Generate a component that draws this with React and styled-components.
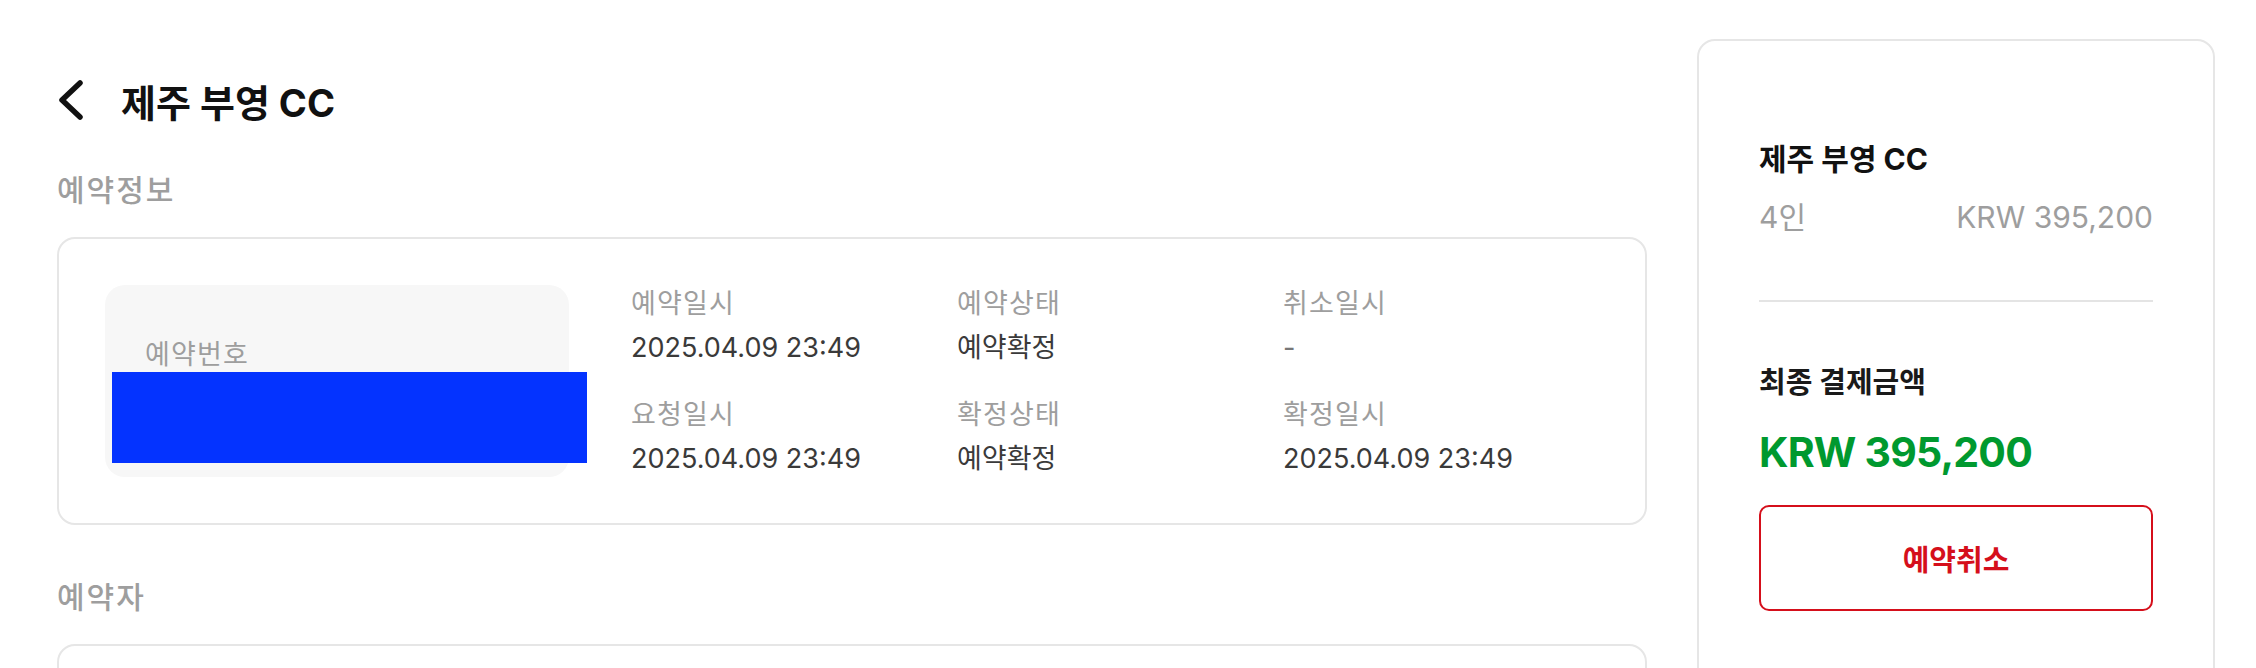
import styled, { createGlobalStyle } from "styled-components";

const GlobalStyle = createGlobalStyle`
  html, body {
    margin: 0;
    padding: 0;
    overflow: hidden;
    background: #ffffff;
  }
  body {
    font-family: "Inter", "Noto Sans CJK KR", sans-serif;
    color: #222;
  }
`;

const Page = styled.div`
  display: flex;
  align-items: flex-start;
  gap: 50px;
  padding: 39px 41px 0 57px;
`;

const Main = styled.div`
  flex: 0 0 1590px;
  min-width: 0;
  padding-top: 36px;
`;

const TitleRow = styled.div`
  display: flex;
  align-items: center;
  gap: 36px;
  height: 56px;
`;

const BackButton = styled.button`
  display: grid;
  place-content: center;
  background: transparent;
  border: none;
  padding: 0;
  margin-top: -6px;
  cursor: pointer;
`;

const Title = styled.h1`
  margin: 0;
  font-size: 38px;
  line-height: 56px;
  font-weight: 700;
  color: #111;
`;

const SectionLabel = styled.h2`
  margin: ${(p) => p.$top}px 0 24px;
  font-size: 30px;
  line-height: 45px;
  font-weight: 500;
  letter-spacing: 2px;
  color: #9e9e9e;
`;

const Card = styled.div`
  border: 2px solid #e6e6e6;
  border-radius: 18px;
  padding: 46px;
  display: flex;
  align-items: flex-start;
  min-height: ${(p) => p.$minHeight || 0}px;
`;

const NumberBox = styled.div`
  position: relative;
  width: 464px;
  height: 192px;
  flex-shrink: 0;
  box-sizing: border-box;
  padding: 50px 40px 0;
  background: #f7f7f7;
  border-radius: 20px;
`;

const Redacted = styled.div`
  position: absolute;
  left: 7px;
  top: 87px;
  width: 475px;
  height: 91px;
  background: #0433ff;
`;

const InfoGrid = styled.div`
  display: grid;
  grid-template-columns: repeat(3, 326px);
  align-content: start;
  row-gap: 27px;
  height: 192px;
  margin-left: 62px;
  margin-top: -1px;
`;

const InfoItem = styled.div`
  display: flex;
  flex-direction: column;
  gap: 4px;
`;

const InfoLabel = styled.span`
  font-size: 27px;
  line-height: 40px;
  letter-spacing: 1.2px;
  color: #9e9e9e;
`;

const InfoValue = styled.span`
  font-size: 27px;
  line-height: 40px;
  color: ${(p) => (p.$muted ? "#777" : "#3a3a3a")};
`;

const Sidebar = styled.aside`
  width: 518px;
  flex-shrink: 0;
  box-sizing: border-box;
  border: 2px solid #e6e6e6;
  border-radius: 18px;
  padding: 97px 60px 80px;
`;

const SideTitle = styled.div`
  font-size: 30px;
  line-height: 43px;
  font-weight: 700;
  color: #111;
`;

const PriceRow = styled.div`
  display: flex;
  justify-content: space-between;
  margin-top: 14px;
  font-size: 30px;
  line-height: 44px;
  color: #9e9e9e;
`;

const Divider = styled.hr`
  border: none;
  height: 2px;
  background: #e4e4e4;
  margin: 61px 0 60px;
`;

const TotalLabel = styled.div`
  font-size: 29px;
  line-height: 42px;
  font-weight: 700;
  color: #1a1a1a;
`;

const TotalAmount = styled.div`
  margin-top: 17px;
  font-size: 41px;
  line-height: 63px;
  font-weight: 700;
  color: #00992f;
  letter-spacing: -0.8px;
`;

const CancelButton = styled.button`
  display: block;
  width: 100%;
  height: 106px;
  margin-top: 21px;
  background: #fff;
  border: 2px solid #d50f1b;
  border-radius: 10px;
  font-family: inherit;
  font-size: 29px;
  font-weight: 700;
  color: #d50f1b;
  cursor: pointer;
`;

const ChevronLeft = () => (
  <svg width="28" height="42" viewBox="0 0 28 42" fill="none">
    <polyline
      points="23,4 5,21 23,38"
      stroke="#111"
      strokeWidth="5.5"
      strokeLinecap="round"
      strokeLinejoin="round"
    />
  </svg>
);

const infoItems = [
  { label: "예약일시", value: "2025.04.09 23:49" },
  { label: "예약상태", value: "예약확정" },
  { label: "취소일시", value: "-", muted: true },
  { label: "요청일시", value: "2025.04.09 23:49" },
  { label: "확정상태", value: "예약확정" },
  { label: "확정일시", value: "2025.04.09 23:49" },
];

const App = () => {
  return (
    <>
      <GlobalStyle />
      <Page>
        <Main>
          <TitleRow>
            <BackButton aria-label="뒤로가기">
              <ChevronLeft />
            </BackButton>
            <Title>제주 부영 CC</Title>
          </TitleRow>

          <SectionLabel $top={37}>예약정보</SectionLabel>
          <Card>
            <NumberBox>
              <InfoLabel>예약번호</InfoLabel>
              <Redacted />
            </NumberBox>
            <InfoGrid>
              {infoItems.map((item) => (
                <InfoItem key={item.label}>
                  <InfoLabel>{item.label}</InfoLabel>
                  <InfoValue $muted={item.muted}>{item.value}</InfoValue>
                </InfoItem>
              ))}
            </InfoGrid>
          </Card>

          <SectionLabel $top={50}>예약자</SectionLabel>
          <Card $minHeight={200} />
        </Main>

        <Sidebar>
          <SideTitle>제주 부영 CC</SideTitle>
          <PriceRow>
            <span>4인</span>
            <span>KRW 395,200</span>
          </PriceRow>
          <Divider />
          <TotalLabel>최종 결제금액</TotalLabel>
          <TotalAmount>KRW 395,200</TotalAmount>
          <CancelButton>예약취소</CancelButton>
        </Sidebar>
      </Page>
    </>
  );
};

export default App;
